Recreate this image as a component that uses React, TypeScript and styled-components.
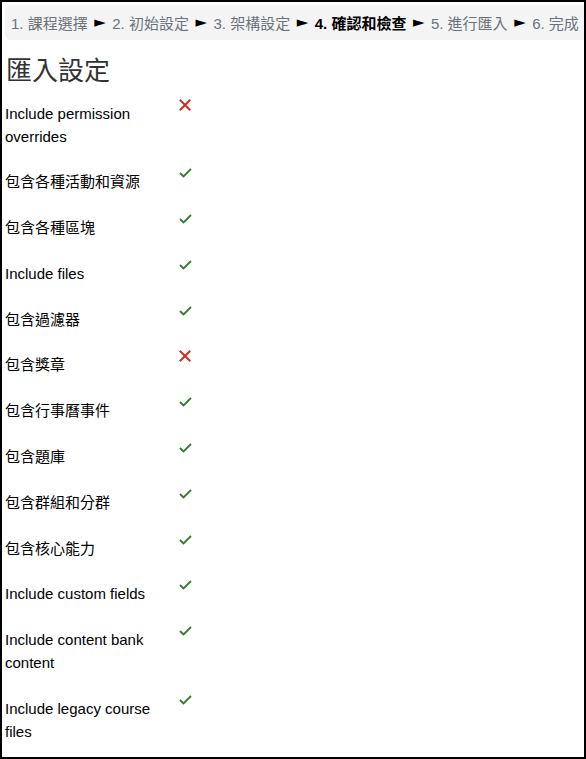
import React from "react";
import styled, { createGlobalStyle } from "styled-components";

const Global = createGlobalStyle`
  html, body { margin: 0; padding: 0; background: #fff; }
  body { font-family: "Liberation Sans", Arial, "Noto Sans CJK TC", sans-serif; color: #1d2125; }
  * { box-sizing: border-box; }
`;

const Frame = styled.div`
  width: 586px;
  height: 759px;
  border: 2px solid #000;
  overflow: hidden;
  padding: 3px 0 0 3px;
`;

const Crumbs = styled.nav`
  display: flex;
  align-items: center;
  height: 35px;
  width: 600px;
  padding-left: 6px;
  background: #f4f4f4;
  border-radius: 6px;
  white-space: nowrap;
  font-size: 15px;
  color: #6a737b;
  gap: 6.5px;
`;

const Step = styled.span<{ $current?: boolean }>`
  color: ${(p) => (p.$current ? "#000" : "#6a737b")};
  font-weight: ${(p) => (p.$current ? 700 : 400)};
`;

const Sep = styled.span`
  color: #000;
  font-family: "DejaVu Sans", sans-serif;
  font-size: 15px;
  line-height: 1;
`;

const Heading = styled.h2`
  margin: 16px 0 14.5px 1px;
  font-size: 26px;
  line-height: 31px;
  font-weight: 400;
  color: #333;
`;

const List = styled.div`
  display: flex;
  flex-direction: column;
  gap: 22.8px;
`;

const Row = styled.div`
  display: flex;
  align-items: flex-start;
  font-size: 15px;
  line-height: 23px;
`;

const Label = styled.div`
  width: 170px;
  padding-right: 5px;
  color: #000;
`;

const Value = styled.div`
  margin-top: -5px;
  display: flex;
  width: 20px;
  height: 16px;
  align-items: center;
  justify-content: center;
`;

const Cross = () => (
  <svg width="12" height="12" viewBox="0 0 12 12">
    <path d="M1.5 1.5 L10.5 10.5 M10.5 1.5 L1.5 10.5" stroke="#ca3120" strokeWidth="2" strokeLinecap="square" />
  </svg>
);

const Check = () => (
  <svg width="13" height="10" viewBox="0 0 13 10">
    <path d="M1 5 L4.5 8.5 L12 1" stroke="#357a32" strokeWidth="1.8" fill="none" />
  </svg>
);

const steps = [
  { t: "1. 課程選擇" },
  { t: "2. 初始設定" },
  { t: "3. 架構設定" },
  { t: "4. 確認和檢查", current: true },
  { t: "5. 進行匯入" },
  { t: "6. 完成" },
];

const rows: { label: string; ok: boolean }[] = [
  { label: "Include permission overrides", ok: false },
  { label: "包含各種活動和資源", ok: true },
  { label: "包含各種區塊", ok: true },
  { label: "Include files", ok: true },
  { label: "包含過濾器", ok: true },
  { label: "包含獎章", ok: false },
  { label: "包含行事曆事件", ok: true },
  { label: "包含題庫", ok: true },
  { label: "包含群組和分群", ok: true },
  { label: "包含核心能力", ok: true },
  { label: "Include custom fields", ok: true },
  { label: "Include content bank content", ok: true },
  { label: "Include legacy course files", ok: true },
];

export default function App() {
  return (
    <>
      <Global />
      <Frame>
        <Crumbs>
          {steps.map((s, i) => (
            <React.Fragment key={s.t}>
              {i > 0 && <Sep>►</Sep>}
              <Step $current={s.current}>{s.t}</Step>
            </React.Fragment>
          ))}
        </Crumbs>
        <Heading>匯入設定</Heading>
        <List>
          {rows.map((r) => (
            <Row key={r.label}>
              <Label>{r.label}</Label>
              <Value>{r.ok ? <Check /> : <Cross />}</Value>
            </Row>
          ))}
        </List>
      </Frame>
    </>
  );
}
